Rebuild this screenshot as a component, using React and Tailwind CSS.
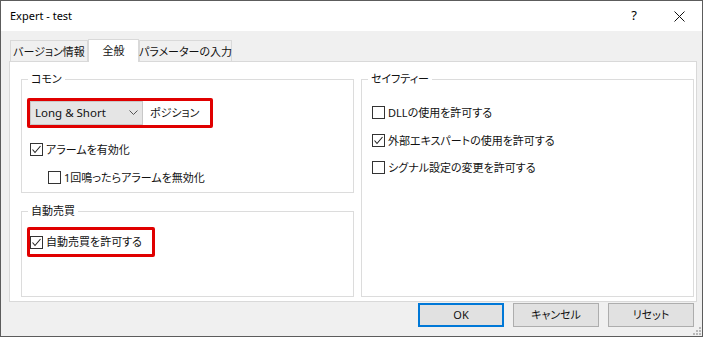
import React from 'react';

const font = "font-['Noto_Sans','Noto_Sans_CJK_JP',sans-serif] [font-feature-settings:'palt']";

function CheckBox({ checked }) {
  return (
    <span className="flex h-[13px] w-[13px] shrink-0 items-center justify-center border border-[#333333] bg-white">
      {checked && (
        <svg width="11" height="11" viewBox="0 0 11 11">
          <polyline points="1.5,5.5 4,8.5 9.5,2" fill="none" stroke="#222" strokeWidth="1.1" />
        </svg>
      )}
    </span>
  );
}

function CheckRow({ checked, label, className = '' }) {
  return (
    <div className={`flex h-[13px] items-center gap-[3px] ${className}`}>
      <CheckBox checked={checked} />
      <span className="whitespace-nowrap text-[11px] leading-[16px] text-[#111]">{label}</span>
    </div>
  );
}

function Group({ title, className = '', children }) {
  return (
    <div className={`relative shrink-0 border border-[#dcdcdc] ${className}`}>
      {/* groupbox caption over the top line */}
      <span className="absolute -top-[9px] left-[6px] whitespace-nowrap bg-white px-[3px] text-[11px] leading-[16px] text-[#111]">
        {title}
      </span>
      {children}
    </div>
  );
}

function Tab({ label, active, width }) {
  if (active) {
    return (
      <div
        className={`relative z-10 -mb-[1px] flex h-[23px] ${width} items-start justify-center whitespace-nowrap border border-b-0 border-[#d9d9d9] bg-white pt-[3px] text-[11px] leading-[16px]`}
      >
        {label}
      </div>
    );
  }
  return (
    <div
      className={`flex h-[21px] ${width} items-center justify-center whitespace-nowrap border border-b-0 border-[#d9d9d9] bg-[#f0f0f0] pt-[1px] text-[11px] leading-[16px]`}
    >
      {label}
    </div>
  );
}

function Button({ label, primary }) {
  return (
    <button
      className={`flex h-[24px] w-[86px] items-center justify-center bg-[#e1e1e1] text-[11px] leading-[16px] text-[#111] ${
        primary ? 'border-2 border-[#0078d7]' : 'border border-[#adadad]'
      }`}
    >
      {label}
    </button>
  );
}

export default function App() {
  return (
    <div className={`relative flex h-[337px] w-[703px] flex-col border border-[#5c5c5c] bg-[#f0f0f0] text-[#111] ${font}`}>
      {/* Title bar */}
      <div className="flex h-[30px] shrink-0 items-center bg-white pl-[9px]">
        <span className="text-[11px] leading-[16px] text-black">Expert - test</span>
        <div className="ml-auto flex h-full items-center">
          <div className="flex h-full w-[44px] items-center justify-center text-[13px] text-black">?</div>
          <div className="flex h-full w-[46px] items-center justify-center">
            <svg width="11" height="11" viewBox="0 0 11 11">
              <path d="M0.5 0.5 L10.5 10.5 M10.5 0.5 L0.5 10.5" stroke="#111" strokeWidth="1" />
            </svg>
          </div>
        </div>
      </div>

      {/* Body */}
      <div className="flex flex-1 flex-col pl-[8px] pr-[5px] pt-[8px]">
        <div className="flex h-[22px] items-end pl-[1px]">
          <Tab label="バージョン情報" width="w-[78px]" />
          <Tab label="全般" width="w-[51px]" active />
          <Tab label="パラメーターの入力" width="w-[93px]" />
        </div>

        <div className="flex h-[241px] gap-[7px] border border-[#d9d9d9] bg-white pl-[11px] pt-[17px]">
          <div className="flex w-[333px] shrink-0 flex-col">
            <Group title="コモン" className="h-[114px] pl-[5px] pt-[18px]">
              <div className="flex h-[30px] w-[186px] rounded-[2px] border-[3px] border-[#e00000]">
                <div className="flex h-full w-[113px] items-center justify-between border border-[#c8c8c8] bg-[#e5e5e5] pl-[4px] pr-[4px]">
                  <span className="text-[11.5px] leading-[16px]">Long &amp; Short</span>
                  <svg width="9" height="6" viewBox="0 0 9 6">
                    <polyline points="0.5,0.5 4.5,4.5 8.5,0.5" fill="none" stroke="#555" strokeWidth="1" />
                  </svg>
                </div>
                <span className="flex items-center pl-[7px] text-[11px] leading-[16px]">ポジション</span>
              </div>
              <CheckRow checked label="アラームを有効化" className="ml-[3px] mt-[15px]" />
              <CheckRow label="1回鳴ったらアラームを無効化" className="ml-[21px] mt-[15px]" />
            </Group>

            <Group title="自動売買" className="mt-[18px] h-[86px] pl-[5px] pt-[15px]">
              <div className="flex h-[30px] w-[128px] items-center rounded-[2px] border-[3px] border-[#e00000]">
                <CheckRow checked label="自動売買を許可する" />
              </div>
            </Group>
          </div>

          <Group title="セイフティー" className="h-[218px] w-[333px] pl-[10px] pt-[26px]">
            <CheckRow label="DLLの使用を許可する" />
            <CheckRow checked label="外部エキスパートの使用を許可する" className="mt-[15px]" />
            <CheckRow label="シグナル設定の変更を許可する" className="mt-[14px]" />
          </Group>
        </div>

        <div className="mt-[1px] flex justify-end gap-[9px] pr-[3px]">
          <Button label="OK" primary />
          <Button label="キャンセル" />
          <Button label="リセット" />
        </div>
      </div>

      {/* resize grip */}
      <svg className="absolute bottom-[1px] right-[1px]" width="8" height="8" viewBox="0 0 8 8">
        {[[6, 0], [3, 3], [6, 3], [0, 6], [3, 6], [6, 6]].map(([x, y]) => (
          <rect key={`${x}-${y}`} x={x} y={y} width="2" height="2" fill="#b8b8b8" />
        ))}
      </svg>
    </div>
  );
}
